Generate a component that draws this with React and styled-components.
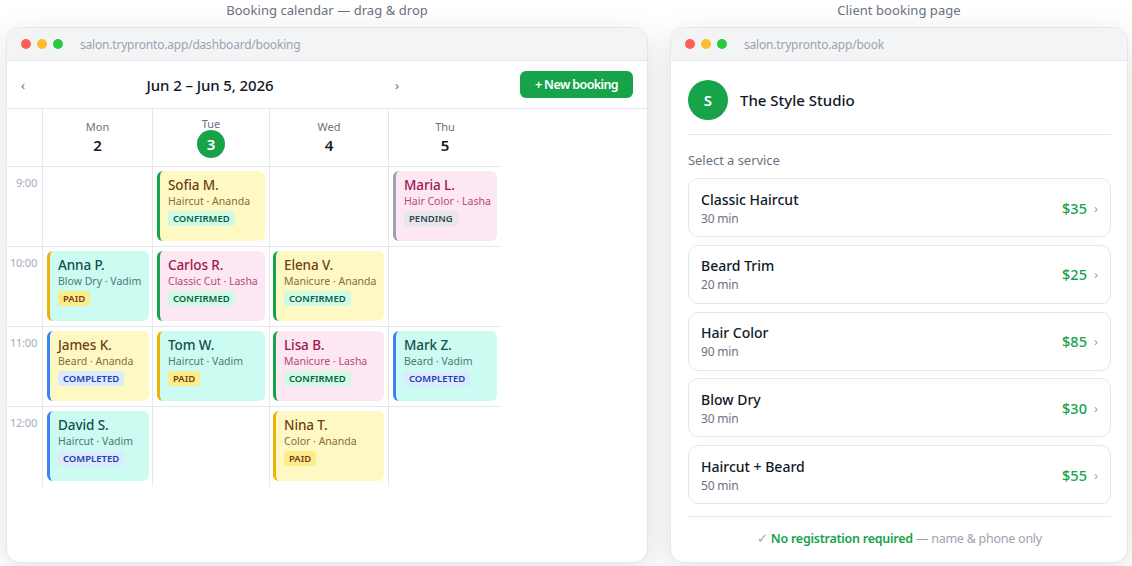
import React from 'react'
import styled, { createGlobalStyle } from 'styled-components'

const Global = createGlobalStyle`
html, body { margin: 0; padding: 0; background: #fff; }
body { font-family: "Noto Sans", "Open Sans", sans-serif; overflow: hidden; }
* { box-sizing: border-box; }
`
const Page = styled.div`
display: flex;
gap: 22px;
width: 1132px;
height: 566px;
padding: 0 4px 3px 6px;
overflow: hidden;
`
const Column = styled.div`
display: flex;
flex-direction: column;
width: ${({ $w }) => $w}px;
`
const Caption = styled.div`
height: 27px;
padding-top: 1px;
font-size: 13px;
line-height: 18px;
color: #6b7280;
text-align: center;
letter-spacing: 0.05px;
`
const Win = styled.div`
flex: 1;
display: flex;
flex-direction: column;
background: #fff;
border: 1px solid #e5e7eb;
border-radius: 14px;
overflow: hidden;
box-shadow: 0 8px 32px rgba(0, 0, 0, 0.12);
`
const Chrome = styled.div`
display: flex;
align-items: center;
height: 33px;
padding: 0 14px;
background: #f3f4f6;
border-bottom: 1px solid #e5e7eb;
flex-shrink: 0;
`
const Dot = styled.span`
width: 10px;
height: 10px;
margin-right: 6px;
border-radius: 50%;
background: ${({ $c }) => $c};
`
const Url = styled.span`
margin-left: 11px;
font-size: 12px;
color: #9ca3af;
letter-spacing: -0.2px;
`
const Toolbar = styled.div`
display: flex;
align-items: center;
height: 48px;
padding-left: 12px;
padding-right: 14px;
border-bottom: 1px solid #e5e7eb;
flex-shrink: 0;
`
const Nav = styled.div`
display: flex;
align-items: center;
width: 382px;
`
const Arrow = styled.span`
font-size: 13px;
color: #6b7280;
width: 8px;
text-align: center;
`
const RangeTitle = styled.div`
flex: 1;
text-align: center;
font-size: 15px;
font-weight: 500;
color: #111827;
letter-spacing: -0.1px;
`
const NewButton = styled.button`
margin-left: auto;
height: 27px;
width: 113px;
border: none;
border-radius: 6px;
background: #16a34a;
color: #fff;
font-family: inherit;
font-size: 12.5px;
font-weight: 600;
letter-spacing: -0.6px;
padding: 0;
`
const Grid = styled.div`
display: grid;
grid-template-columns: 36px 110px 117px 119px 113px;
grid-template-rows: 58px repeat(4, 80px);
width: 495px;
`
const Corner = styled.div`
border-right: 1px solid #e5e7eb;
border-bottom: 1px solid #e5e7eb;
`
const DayHead = styled.div`
display: flex;
flex-direction: column;
align-items: center;
justify-content: center;
border-right: 1px solid ${({ $end }) => ($end ? 'transparent' : '#e5e7eb')};
border-bottom: 1px solid #e5e7eb;
`
const DayName = styled.span`
font-size: 11px;
line-height: 15px;
color: #6b7280;
margin-top: ${({ $today }) => ($today ? '-2px' : '0')};
margin-bottom: ${({ $today }) => ($today ? '-1px' : '0')};
`
const DayNum = styled.span`
font-size: 15px;
line-height: 22px;
font-weight: 600;
color: #111827;
`
const TodayNum = styled.span`
display: flex;
align-items: center;
justify-content: center;
width: 28px;
height: 28px;
border-radius: 50%;
background: #16a34a;
color: #fff;
font-size: 15px;
font-weight: 600;
`
const TimeCell = styled.div`
border-right: 1px solid #e5e7eb;
border-bottom: 1px solid ${({ $last }) => ($last ? 'transparent' : '#e5e7eb')};
padding: 8px 5px 0 0;
text-align: right;
font-size: 11px;
line-height: 15px;
color: #a3abbd;
letter-spacing: -0.2px;
`
const slotSides = ['4px 3px 4px 4px', '4px 4px 4px 4px', '4px 4px 4px 3px', '4px 4px 4px 4px']
const Slot = styled.div`
display: flex;
padding: ${({ $col }) => slotSides[$col]};
border-right: 1px solid ${({ $col }) => ($col === 3 ? 'transparent' : '#e5e7eb')};
border-bottom: 1px solid ${({ $last }) => ($last ? 'transparent' : '#e5e7eb')};
`
const tones = {
  yellow: { bg: '#fef9c3', title: '#713f12', sub: '#8a6a3c' },
  teal: { bg: '#ccfbf1', title: '#134e4a', sub: '#4b7a74' },
  pink: { bg: '#fce7f3', title: '#9d174d', sub: '#b5497b' },
}
const edges = { CONFIRMED: '#16a34a', PENDING: '#9ca3af', PAID: '#eab308', COMPLETED: '#3b82f6' }
const badges = {
  CONFIRMED: { bg: '#d1fae5', fg: '#065f46' },
  PENDING: { bg: '#e5e7eb', fg: '#374151' },
  PAID: { bg: '#fdec8a', fg: '#713f12' },
  COMPLETED: { bg: '#dbeafe', fg: '#1e40af' },
}
const Card = styled.div`
flex: 1;
height: 70px;
min-width: 0;
padding: 6px 6px 0 8px;
border-left: 3px solid ${({ $status }) => edges[$status]};
border-radius: 6px;
background: ${({ $tone }) => tones[$tone].bg};
`
const CardName = styled.div`
font-size: 13.5px;
line-height: 17px;
font-weight: 500;
letter-spacing: -0.1px;
color: ${({ $tone }) => tones[$tone].title};
`
const CardSub = styled.div`
font-size: 10.5px;
line-height: 14px;
white-space: nowrap;
color: ${({ $tone }) => tones[$tone].sub};
`
const Badge = styled.span`
display: block;
width: fit-content;
margin-top: 3px;
padding: 0 5px;
height: 15px;
border-radius: 3px;
font-size: 9.5px;
line-height: 15px;
font-weight: 600;
background: ${({ $status }) => badges[$status].bg};
color: ${({ $status }) => badges[$status].fg};
`
const Body = styled.div`
flex: 1;
display: flex;
flex-direction: column;
padding: 19px 16px 0 17px;
`
const Brand = styled.div`
display: flex;
align-items: center;
gap: 12px;
padding-bottom: 14px;
border-bottom: 1px solid #e5e7eb;
`
const Avatar = styled.div`
display: flex;
align-items: center;
justify-content: center;
width: 40px;
height: 40px;
border-radius: 50%;
background: #16a34a;
color: #fff;
font-size: 15px;
font-weight: 600;
`
const BrandName = styled.div`
font-size: 15px;
font-weight: 500;
color: #111827;
`
const SectionLabel = styled.div`
margin: 17px 0 9px;
font-size: 13px;
line-height: 17px;
color: #6b7280;
letter-spacing: -0.05px;
`
const ServiceList = styled.div`
display: flex;
flex-direction: column;
gap: 7.75px;
`
const Service = styled.div`
display: flex;
align-items: center;
justify-content: space-between;
height: 59px;
padding: 0 12px;
border: 1px solid #e5e7eb;
border-radius: 10px;
`
const ServiceText = styled.div`
padding-top: 2px;
`
const ServiceName = styled.div`
font-size: 14px;
line-height: 19px;
font-weight: 500;
color: #111827;
`
const ServiceTime = styled.div`
margin-top: 1px;
font-size: 12px;
line-height: 18px;
color: #6b7280;
letter-spacing: -0.2px;
`
const PriceWrap = styled.div`
display: flex;
align-items: center;
gap: 7px;
`
const Price = styled.span`
font-size: 14.5px;
font-weight: 500;
color: #16a34a;
`
const Chevron = styled.span`
font-size: 13px;
color: #9ca3af;
`
const Footer = styled.div`
margin-top: 11.5px;
padding-top: 13px;
border-top: 1px solid #e5e7eb;
text-align: center;
font-size: 12.5px;
line-height: 18px;
color: #9ca3af;
letter-spacing: -0.25px;
`
const FooterStrong = styled.strong`
color: #16a34a;
font-weight: 600;
`

const days = [['Mon', 2], ['Tue', 3, true], ['Wed', 4], ['Thu', 5]]
const rows = [
  ['9:00', [
    null,
    ['Sofia M.', 'Haircut · Ananda', 'CONFIRMED', 'yellow'],
    null,
    ['Maria L.', 'Hair Color · Lasha', 'PENDING', 'pink'],
  ]],
  ['10:00', [
    ['Anna P.', 'Blow Dry · Vadim', 'PAID', 'teal'],
    ['Carlos R.', 'Classic Cut · Lasha', 'CONFIRMED', 'pink'],
    ['Elena V.', 'Manicure · Ananda', 'CONFIRMED', 'yellow'],
    null,
  ]],
  ['11:00', [
    ['James K.', 'Beard · Ananda', 'COMPLETED', 'yellow'],
    ['Tom W.', 'Haircut · Vadim', 'PAID', 'teal'],
    ['Lisa B.', 'Manicure · Lasha', 'CONFIRMED', 'pink'],
    ['Mark Z.', 'Beard · Vadim', 'COMPLETED', 'teal'],
  ]],
  ['12:00', [
    ['David S.', 'Haircut · Vadim', 'COMPLETED', 'teal'],
    null,
    ['Nina T.', 'Color · Ananda', 'PAID', 'yellow'],
    null,
  ]],
]
const services = [
  ['Classic Haircut', '30 min', '$35'],
  ['Beard Trim', '20 min', '$25'],
  ['Hair Color', '90 min', '$85'],
  ['Blow Dry', '30 min', '$30'],
  ['Haircut + Beard', '50 min', '$55'],
]

const WindowBar = ({ url }) => (
  <Chrome>
    <Dot $c="#ff5f57" />
    <Dot $c="#febc2e" />
    <Dot $c="#28c840" />
    <Url>{url}</Url>
  </Chrome>
)

const App = () => {
  return (
    <Page>
      <Global />
      <Column $w={642}>
        <Caption>Booking calendar — drag &amp; drop</Caption>
        <Win>
          <WindowBar url="salon.trypronto.app/dashboard/booking" />
          <Toolbar>
            <Nav>
              <Arrow>‹</Arrow>
              <RangeTitle>Jun 2 – Jun 5, 2026</RangeTitle>
              <Arrow>›</Arrow>
            </Nav>
            <NewButton>+ New booking</NewButton>
          </Toolbar>
          <Grid>
            <Corner />
            {days.map(([name, num, today], i) => (
              <DayHead key={name} $end={i === 3}>
                <DayName $today={today}>{name}</DayName>
                {today ? <TodayNum>{num}</TodayNum> : <DayNum>{num}</DayNum>}
              </DayHead>
            ))}
            {rows.map(([time, cells], r) => (
              <React.Fragment key={time}>
                <TimeCell $last={r === 3}>{time}</TimeCell>
                {cells.map((c, i) => (
                  <Slot key={i} $col={i} $last={r === 3}>
                    {c && (
                      <Card $status={c[2]} $tone={c[3]}>
                        <CardName $tone={c[3]}>{c[0]}</CardName>
                        <CardSub $tone={c[3]}>{c[1]}</CardSub>
                        <Badge $status={c[2]}>{c[2]}</Badge>
                      </Card>
                    )}
                  </Slot>
                ))}
              </React.Fragment>
            ))}
          </Grid>
        </Win>
      </Column>
      <Column $w={458}>
        <Caption>Client booking page</Caption>
        <Win>
          <WindowBar url="salon.trypronto.app/book" />
          <Body>
            <Brand>
              <Avatar>S</Avatar>
              <BrandName>The Style Studio</BrandName>
            </Brand>
            <SectionLabel>Select a service</SectionLabel>
            <ServiceList>
              {services.map(([name, time, price]) => (
                <Service key={name}>
                  <ServiceText>
                    <ServiceName>{name}</ServiceName>
                    <ServiceTime>{time}</ServiceTime>
                  </ServiceText>
                  <PriceWrap>
                    <Price>{price}</Price>
                    <Chevron>›</Chevron>
                  </PriceWrap>
                </Service>
              ))}
            </ServiceList>
            <Footer>✓ <FooterStrong>No registration required</FooterStrong> — name &amp; phone only</Footer>
          </Body>
        </Win>
      </Column>
    </Page>
  )
}

export default App
